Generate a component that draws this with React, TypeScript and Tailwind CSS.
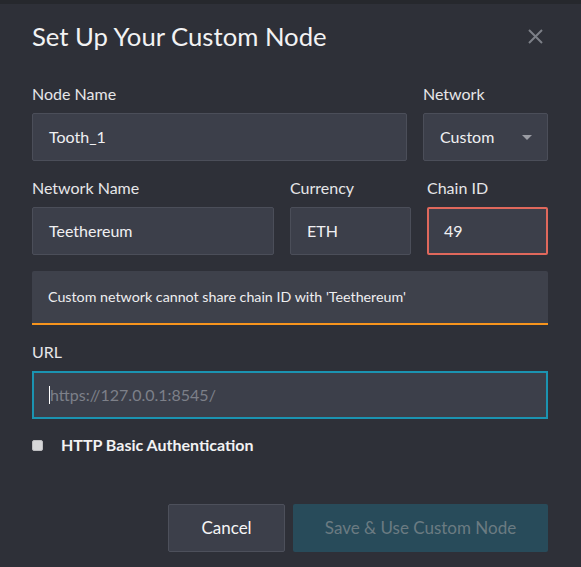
export default function App() {
  return (
    <div
      className="w-[581px] h-[567px] overflow-hidden bg-[#2e3038] text-[#e8e8ea]"
      style={{ fontFamily: 'Lato, "Open Sans", sans-serif' }}
    >
      <div className="h-[4px] bg-[#26282d]" />
      <div className="pl-[32px] pr-[33px]">
        {/* Header */}
        <div className="mt-[16px] flex items-start justify-between">
          <h1 className="text-[25.7px] leading-[32px] text-[#f2f2f3]">Set Up Your Custom Node</h1>
          <button className="mt-[9px] mr-[5px] text-[#7c7f87]" aria-label="Close">
            <svg width="15" height="15" viewBox="0 0 15 15" fill="none" stroke="currentColor" strokeWidth="2">
              <path d="M1 1L14 14M14 1L1 14" />
            </svg>
          </button>
        </div>

        {/* Row 1 */}
        <div className="mt-[32px] flex gap-4">
          <Field label="Node Name" className="w-[375px]">
            <Box>Tooth_1</Box>
          </Field>
          <Field label="Network" className="flex-1">
            <Box>
              <span className="flex-1">Custom</span>
              <svg width="10" height="5" viewBox="0 0 10 5" className="mr-[3px]">
                <path d="M0 0H10L5 5Z" fill="#9a9ca3" />
              </svg>
            </Box>
          </Field>
        </div>

        {/* Row 2 */}
        <div className="mt-[17px] flex gap-4">
          <Field label="Network Name" className="w-[242px]">
            <Box>Teethereum</Box>
          </Field>
          <Field label="Currency" className="w-[121px]">
            <Box>ETH</Box>
          </Field>
          <Field label="Chain ID" className="flex-1">
            <Box className="border-[#e0685c] border-2 pl-[15px]">49</Box>
          </Field>
        </div>

        {/* Error */}
        <div className="mt-[16px] h-[54px] rounded-t-[2px] bg-[#3e414b] border-b-2 border-[#f7941d] pl-[16px] flex items-center text-[14.25px] text-[#eeeef0]">
          Custom network cannot share chain ID with 'Teethereum'
        </div>

        {/* URL */}
        <Field label="URL" className="mt-[17px]">
          <div className="h-[48px] flex items-center border-2 border-[#1b93b1] bg-[#3c3f4a] pl-[15px] text-[16px]">
            <span className="w-px h-[18px] bg-white" />
            <span className="text-[#7d8089]">https://127.0.0.1:8545/</span>
          </div>
        </Field>

        {/* Checkbox */}
        <label className="mt-[16px] flex items-center h-[20px]">
          <span className="w-[11px] h-[11px] rounded-[2px] bg-[#d7d7d9] border border-[#bdbdc0]" />
          <span className="ml-[18px] text-[16px] font-bold text-[#f2f2f3]">HTTP Basic Authentication</span>
        </label>

        {/* Buttons */}
        <div className="mt-[49px] flex justify-end gap-[8px]">
          <button className="w-[117px] h-[48px] rounded-[2px] border border-[#4d505b] bg-[#3c3f4a] text-[17px] text-[#f5f5f6]">
            Cancel
          </button>
          <button className="w-[255px] h-[48px] rounded-[2px] bg-[#284b5a] text-[17px] text-[#6b7b82]">
            Save &amp; Use Custom Node
          </button>
        </div>
      </div>
    </div>
  )
}

function Field({ label, className = '', children }: { label: string; className?: string; children: React.ReactNode }) {
  return (
    <div className={className}>
      <div className="text-[16px] leading-[20px] mb-[9px] text-[#e6e6e8]">{label}</div>
      {children}
    </div>
  )
}

function Box({ className = 'border border-[#4b4e59] pl-[16px]', children }: { className?: string; children: React.ReactNode }) {
  return (
    <div className={`h-[48px] flex items-center rounded-[2px] bg-[#3c3f4a] pr-[12px] text-[16px] text-[#f0f0f2] ${className}`}>
      {children}
    </div>
  )
}
